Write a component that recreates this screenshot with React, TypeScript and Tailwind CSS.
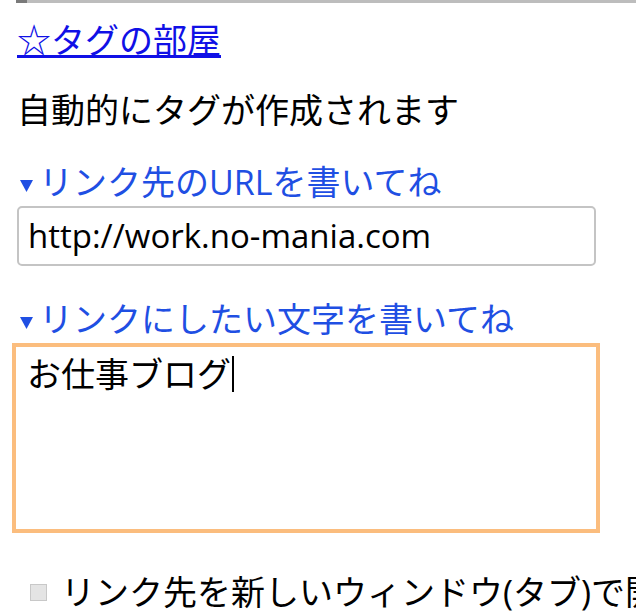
import React from 'react';

const font = { fontFamily: '"Open Sans", "Noto Sans CJK JP", sans-serif' };

function Label({ children }: { children: React.ReactNode }) {
  return (
    <div className="flex h-[40px] items-center whitespace-nowrap text-[34px] leading-[40px] text-[#1f4fe3]">
      <svg className="ml-[3px] mr-[6px] mt-[6px] h-[13px] w-[13px]" viewBox="0 0 13 13">
        <polygon points="0,1 13,1 6.5,13" fill="#1f4fe3" />
      </svg>
      <span>{children}</span>
    </div>
  );
}

export default function App() {
  return (
    <div className="h-[616px] w-[636px] overflow-hidden bg-white text-black" style={font}>
      {/* top rule */}
      <div className="flex h-[3px]">
        <div className="w-[16px] bg-white" />
        <div className="w-[11px] bg-[#7a7a7a]" />
        <div className="flex-1 bg-[#bdbdbd]" />
      </div>

      <div className="pl-[17px]">
        <a href="#" className="mt-[17px] block h-[40px] text-[34px] leading-[40px] text-[#1010e6] underline">
          ☆タグの部屋
        </a>

        <p className="mt-[30px] h-[40px] text-[34px] leading-[40px]">自動的にタグが作成されます</p>

        <div className="mt-[32px]">
          <Label>リンク先のURLを書いてね</Label>
        </div>

        <div className="mt-[4px] flex h-[60px] w-[579px] items-center rounded-[5px] border-2 border-[#c4c4c4] pl-[9px] text-[33px]">
          http://work.no-mania.com
        </div>

        <div className="mt-[33px]">
          <Label>リンクにしたい文字を書いてね</Label>
        </div>

        <div className="-ml-[5px] mt-[4px] h-[190px] w-[588px] border-4 border-[#fbbd7e] px-[11px] pt-[7px]">
          <div className="flex h-[40px] items-center text-[34px] leading-[40px]">
            お仕事ブログ
            <span className="ml-[1px] h-[36px] w-[2px] bg-black" />
          </div>
        </div>

        <div className="mt-[39px] flex h-[40px] items-center whitespace-nowrap">
          <span className="ml-[13px] mr-[14px] h-[17px] w-[17px] shrink-0 border border-[#c8c8c8] bg-[#e4e4e4]" />
          <span className="text-[34px] leading-[40px]">リンク先を新しいウィンドウ(タブ)で開く</span>
        </div>
      </div>
    </div>
  );
}
